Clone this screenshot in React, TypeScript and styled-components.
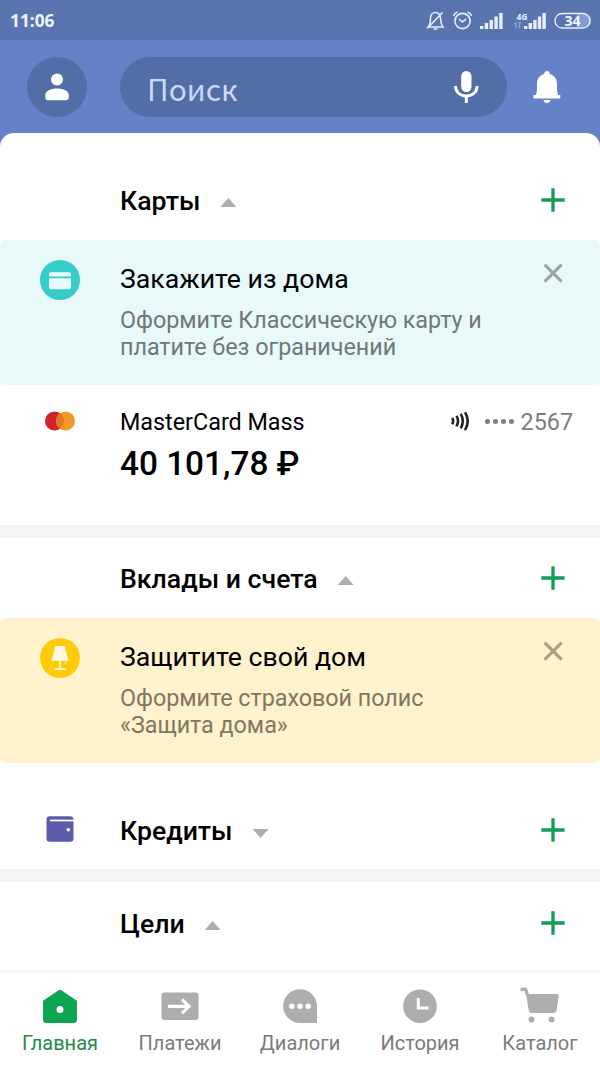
import React from 'react';
import styled, { createGlobalStyle } from 'styled-components';

const Global = createGlobalStyle`
  * { box-sizing: border-box; }
  body { margin: 0; background: #fff; }
  svg { display: block; flex: none; }
`;

const Screen = styled.div`
  width: 600px;
  height: 1066px;
  overflow: hidden;
  display: flex;
  flex-direction: column;
  background: #6581c7;
  font-family: Roboto, sans-serif;
  color: #000;
`;

const StatusBar = styled.div`
  height: 40px;
  flex: none;
  display: flex;
  align-items: center;
  justify-content: space-between;
  padding: 1px 9px 0 10px;
  background: #5a74b0;
`;

const Clock = styled.span`
  padding-top: 1px;
  font: 700 17.3px/20px 'Noto Sans', sans-serif;
  color: #eef3ff;
`;

const Header = styled.header`
  height: 93px;
  flex: none;
  display: flex;
  align-items: center;
  padding: 0 39px 0 27px;
`;

const Avatar = styled.button`
  width: 60px;
  height: 60px;
  padding: 0;
  border: 0;
  border-radius: 50%;
  display: grid;
  place-items: center;
  background: #536ea6;
`;

const Search = styled.div`
  width: 387px;
  height: 60px;
  margin: 0 26px 0 33px;
  padding: 0 28px 0 27px;
  border-radius: 30px;
  display: flex;
  align-items: center;
  justify-content: space-between;
  background: #536ea6;
`;

const Placeholder = styled.span`
  padding-top: 3px;
  font: 400 30px/40px 'Noto Sans CJK SC', sans-serif;
  color: #c9d8fb;
`;

const Sheet = styled.main`
  flex: 1;
  min-height: 0;
  display: flex;
  flex-direction: column;
  background: #fff;
  border-radius: 14px 14px 0 0;
  overflow: hidden;
`;

const SectionHead = styled.div<{ $h: number; $top: number }>`
  height: ${(p) => p.$h}px;
  padding: ${(p) => p.$top}px 35px 0 0;
  flex: none;
  display: flex;
  align-items: flex-start;
`;

const IconCell = styled.div<{ $top?: number }>`
  width: 120px;
  flex: none;
  display: flex;
  justify-content: center;
  padding-top: ${(p) => p.$top ?? 0}px;
`;

const SectionTitle = styled.h2`
  margin: 0;
  font-size: 26.67px;
  line-height: 32px;
  font-weight: 500;
`;

const Arrow = styled.span<{ $down?: boolean }>`
  width: 16px;
  height: 9px;
  margin: ${(p) => (p.$down ? 14 : 13)}px 0 0 20px;
  background: #adadad;
  clip-path: ${(p) => (p.$down ? 'polygon(0 0, 100% 0, 50% 100%)' : 'polygon(0 100%, 50% 0, 100% 100%)')};
`;

const AddButton = styled.button`
  margin: 3px 0 0 auto;
  padding: 0;
  border: 0;
  background: none;
`;

const Banner = styled.section<{ $bg: string }>`
  height: 145px;
  flex: none;
  display: flex;
  padding: 20px 37px 0 0;
  border-radius: 5px;
  background: ${(p) => p.$bg};
`;

const BannerBody = styled.div`
  flex: 1;
  padding-top: 3px;
`;

const BannerTitle = styled.h3`
  margin: 0 0 12px;
  font-size: 26.67px;
  line-height: 32px;
  font-weight: 400;
`;

const BannerText = styled.p<{ $color: string }>`
  margin: 0;
  white-space: pre-line;
  font-size: 23.33px;
  line-height: 27px;
  letter-spacing: -0.03px;
  color: ${(p) => p.$color};
`;

const CloseButton = styled.button`
  margin: 3px 0 0;
  padding: 0;
  border: 0;
  background: none;
  align-self: flex-start;
`;

const CardRow = styled.section`
  height: 140px;
  flex: none;
  display: flex;
  padding: 22px 27px 0 0;
`;

const CardInfo = styled.div`
  flex: 1;
`;

const CardName = styled.div`
  font-size: 23.33px;
  line-height: 30px;
`;

const Balance = styled.div`
  margin-top: 7px;
  font-size: 33.33px;
  line-height: 40px;
  font-weight: 500;
`;

const CardNumber = styled.div`
  height: 30px;
  display: flex;
  align-items: center;
  font-size: 23.33px;
  line-height: 30px;
  color: #7d7d7d;
`;

const Dots = styled.span`
  display: flex;
  gap: 3px;
  margin: 0 7px 2px 15px;
  i {
    width: 5px;
    height: 5px;
    border-radius: 50%;
    background: #7d7d7d;
  }
`;

const Divider = styled.div`
  height: 13px;
  flex: none;
  background: #f4f4f4;
`;

const TabBar = styled.nav`
  height: 96px;
  flex: none;
  display: grid;
  grid-template-columns: repeat(5, 1fr);
  background: #fff;
  border-top: 3px solid #f7f7f7;
`;

const Tab = styled.a<{ $active?: boolean }>`
  display: flex;
  flex-direction: column;
  align-items: center;
  padding-top: 14px;
  font-size: 20px;
  line-height: 24px;
  gap: 6.5px;
  color: ${(p) => (p.$active ? '#1f8a4c' : '#7b7b7b')};
`;

const StatusIcons = () => (
  <svg width="167" height="26" viewBox="0 0 167 26" fill="none" stroke="#e6eeff" strokeWidth="1.6">
    <path d="M4 19 H19 C16.5 16 17 13 16.500 10 C16 6 13.500 4.500 11.500 4.500 C8.500 4.500 6.500 7 6.500 10 C6.500 13 6.500 16 4 19 M9.500 21 H13.500 M3 20.500 L18.500 4.500" />
    <circle cx="38.500" cy="13" r="7.600" />
    <path d="M35 11 L38.500 14 L42 11 M29.500 8 Q30.500 5 33.500 4 M47.500 8 Q46.500 5 43.500 4" />
    <g fill="#e6eeff" stroke="none">
      <rect x="56" y="18" width="3.400" height="3" />
      <rect x="60.800" y="15" width="3.400" height="6" />
      <rect x="65.600" y="12" width="3.400" height="9" />
      <rect x="70.400" y="8.500" width="3.400" height="12.500" />
      <rect x="75.200" y="5" width="3.400" height="16" />
      <rect x="100" y="18" width="3.400" height="3" />
      <rect x="104.600" y="15" width="3.400" height="6" />
      <rect x="109.200" y="12" width="3.400" height="9" />
      <rect x="113.800" y="8.500" width="3.400" height="12.500" />
      <rect x="118.400" y="5" width="3.400" height="16" />
      <text x="92.500" y="11.500" fontFamily="Noto Sans" fontSize="8.500" fontWeight="700">4G</text>
    </g>
    <path d="M92 20.500 V14.500 M90.500 16 L92 14.500 M95.500 14.500 V20.500 M94 14.700 H97" stroke="#93a8d6" strokeWidth="1.200" />
    <path d="M153 6 H161 A6.500 6.500 0 0 1 161 19 H153 Z" fill="#849bce" stroke="none" />
    <rect x="131" y="5.500" width="35" height="14.500" rx="7.250" strokeWidth="1.400" />
    <text x="148.500" y="18" textAnchor="middle" fill="#f0f5ff" stroke="none" fontFamily="Noto Sans" fontSize="14" fontWeight="700">34</text>
  </svg>
);

const Plus = () => (
  <svg width="24" height="24" viewBox="0 0 24 24" stroke="#119d55" strokeWidth="3.300">
    <path d="M12 .300 V23.700 M.300 12 H23.700" />
  </svg>
);

const Cross = () => (
  <svg width="20" height="20" viewBox="0 0 20 20" stroke="#000" strokeOpacity=".34" strokeWidth="3">
    <path d="M1.600 1.600 L18.600 18.600 M18.600 1.600 L1.600 18.600" />
  </svg>
);

interface SectionProps {
  title: string;
  height: number;
  top: number;
  down?: boolean;
  icon?: React.ReactNode;
}

const Section = ({ title, height, top, down, icon }: SectionProps) => (
  <SectionHead $h={height} $top={top}>
    <IconCell $top={1}>{icon}</IconCell>
    <SectionTitle>{title}</SectionTitle>
    <Arrow $down={down} />
    <AddButton aria-label="Добавить"><Plus /></AddButton>
  </SectionHead>
);

interface PromoProps {
  bg: string;
  color: string;
  title: string;
  text: string;
  icon: React.ReactNode;
}

const Promo = ({ bg, color, title, text, icon }: PromoProps) => (
  <Banner $bg={bg}>
    <IconCell>{icon}</IconCell>
    <BannerBody>
      <BannerTitle>{title}</BannerTitle>
      <BannerText $color={color}>{text}</BannerText>
    </BannerBody>
    <CloseButton aria-label="Закрыть"><Cross /></CloseButton>
  </Banner>
);

const CardIcon = () => (
  <svg width="40" height="40" viewBox="0 0 40 40">
    <circle cx="20" cy="20" r="20" fill="#35ccca" />
    <path d="M9 16.600 V14.300 Q9 12.300 11 12.300 H29 Q31 12.300 31 14.300 V16.600 Z M9 18.300 H31 V27.200 Q31 29.200 29 29.200 H11 Q9 29.200 9 27.200 Z" fill="#eafafa" />
  </svg>
);

const LampIcon = () => (
  <svg width="40" height="40" viewBox="0 0 40 40">
    <circle cx="20" cy="20" r="20" fill="#fecb0b" />
    <path d="M15.300 8 H24.700 L28.500 22.700 H11.500 Z M19.200 22 H20.800 V30.500 H19.200 Z M14 32 Q14.500 30.200 17 30.200 H23.500 Q26 30.200 26.500 32 Z" fill="#fff8df" />
    <path d="M25.700 22 V26.500" stroke="#fff8df" strokeWidth=".8" />
  </svg>
);

const WalletIcon = () => (
  <svg width="28" height="26" viewBox="0 0 28 26">
    <rect x=".5" y=".3" width="27" height="25.400" rx="3.300" fill="#5c5bac" />
    <path d="M4 4.500 H28" stroke="#fff" strokeWidth="1.700" />
    <circle cx="22.300" cy="13.700" r="1.800" fill="#fff" />
  </svg>
);

const tabs = [
  {
    label: 'Главная',
    icon: (
      <>
        <path d="M20 2.700 Q20.700 2.700 21.300 3.200 L37 13.800 V32.500 Q37 36 33.500 36 H6.500 Q3 36 3 32.500 V13.800 L18.700 3.200 Q19.300 2.700 20 2.700 Z" fill="#0ba64f" />
        <circle cx="20" cy="22.500" r="3.500" fill="#fff" />
      </>
    ),
  },
  {
    label: 'Платежи',
    icon: (
      <>
        <rect x="1.500" y="5.500" width="37" height="27.500" rx="3.200" fill="#adadad" />
        <path d="M8 19.300 H28 M22 12.300 L29 19.300 L22 26.300" fill="none" stroke="#fff" strokeWidth="3.200" />
      </>
    ),
  },
  {
    label: 'Диалоги',
    icon: (
      <>
        <path d="M20 2.300 A17 17 0 0 1 37 19.300 V36 H20 A16.850 16.850 0 0 1 20 2.300 Z" fill="#adadad" />
        <g fill="#fff">
          <circle cx="11.800" cy="19.300" r="2.700" />
          <circle cx="20" cy="19.300" r="2.700" />
          <circle cx="28.200" cy="19.300" r="2.700" />
        </g>
      </>
    ),
  },
  {
    label: 'История',
    icon: (
      <>
        <circle cx="20" cy="19.200" r="16.800" fill="#adadad" />
        <path d="M18.300 11 V21 H28.500" fill="none" stroke="#fff" strokeWidth="3" />
      </>
    ),
  },
  {
    label: 'Каталог',
    icon: (
      <>
        <path d="M.5 2.300 H5.700 L7.300 7.500" fill="none" stroke="#adadad" strokeWidth="3.200" />
        <path d="M6 7 H36.500 Q39 7 38.600 9.300 L36.600 23 Q36.200 26 33.200 26 H11.800 Q9.200 26 8.700 23 Z" fill="#adadad" />
        <circle cx="11.500" cy="32.500" r="3" fill="#adadad" />
        <circle cx="31.500" cy="32.500" r="3" fill="#adadad" />
      </>
    ),
  },
];

export default function App() {
  return (
    <Screen>
      <Global />
      <StatusBar>
        <Clock>11:06</Clock>
        <StatusIcons />
      </StatusBar>
      <Header>
        <Avatar aria-label="Профиль">
          <svg width="24" height="28" viewBox="0 0 24 28" fill="#fff">
            <circle cx="12" cy="6.500" r="6" />
            <path d="M.3 22 C.3 17.700 6 15.500 12 15.500 S23.700 17.700 23.700 22 V24.500 Q23.700 27.300 21 27.300 H3 Q.3 27.300 .3 24.500 Z" />
          </svg>
        </Avatar>
        <Search>
          <Placeholder>Поиск</Placeholder>
          <svg width="26" height="32" viewBox="0 0 26 32">
            <rect x="8.200" y="0" width="10.300" height="21" rx="5.150" fill="#fff" />
            <path d="M2.500 15 C2.500 21 7 25 13.300 25 S24.100 21 24.100 15 M13.300 25 V32" fill="none" stroke="#fff" strokeWidth="2.900" />
          </svg>
        </Search>
        <svg width="28" height="34" viewBox="0 0 28 34" fill="#fff">
          <path d="M14 1 C15.700 1 16.700 2 16.700 4 C21.500 5.300 24 9 24 14 C24 20 24 23 25.300 25 H27.300 V28.500 H.5 V25 H2.700 C4 23 4 20 4 14 C4 9 6.500 5.300 11.300 4 C11.300 2 12.300 1 14 1 Z M10.500 30 H17.500 Q17 33 14 33 T10.500 30 Z" />
        </svg>
      </Header>
      <Sheet>
        <Section title="Карты" height={107} top={52} />
        <Promo bg="#e8f9fa" color="#6f7879" title="Закажите из дома" text={'Оформите Классическую карту и\nплатите без ограничений'} icon={<CardIcon />} />
        <CardRow>
          <IconCell $top={4}>
            <svg width="30" height="20" viewBox="0 0 30 20">
              <circle cx="9.500" cy="10" r="9.500" fill="#d2232d" />
              <circle cx="20.500" cy="10" r="9.500" fill="#f29a25" />
              <path d="M15 2.250 A9.500 9.500 0 0 1 15 17.750 A9.500 9.500 0 0 1 15 2.250 Z" fill="#df7929" />
            </svg>
          </IconCell>
          <CardInfo>
            <CardName>MasterCard Mass</CardName>
            <Balance>40 101,78 ₽</Balance>
          </CardInfo>
          <CardNumber>
            <svg width="19" height="20" viewBox="0 .7 19 20" fill="none" stroke="#222" strokeWidth="2.600">
              <path d="M1.300 6.500 Q2.900 9.500 1.300 13 M5.500 4.500 Q8.500 9.500 5.500 15 M9.800 2.500 Q13.800 9.500 9.800 17 M14 .9 Q19.500 9.500 14 18.800" />
            </svg>
            <Dots><i /><i /><i /><i /></Dots>
            2567
          </CardNumber>
        </CardRow>
        <Divider />
        <Section title="Вклады и счета" height={80} top={25} />
        <Promo bg="#fff2cd" color="#807762" title="Защитите свой дом" text={'Оформите страховой полис\n«Защита дома»'} icon={<LampIcon />} />
        <Section title="Кредиты" height={106} top={52} down icon={<WalletIcon />} />
        <Divider />
        <Section title="Цели" height={88} top={26} />
      </Sheet>
      <TabBar>
        {tabs.map((t, i) => (
          <Tab key={t.label} $active={i === 0}>
            <svg width="40" height="37" viewBox="0 0 40 37">{t.icon}</svg>
            {t.label}
          </Tab>
        ))}
      </TabBar>
    </Screen>
  );
}
